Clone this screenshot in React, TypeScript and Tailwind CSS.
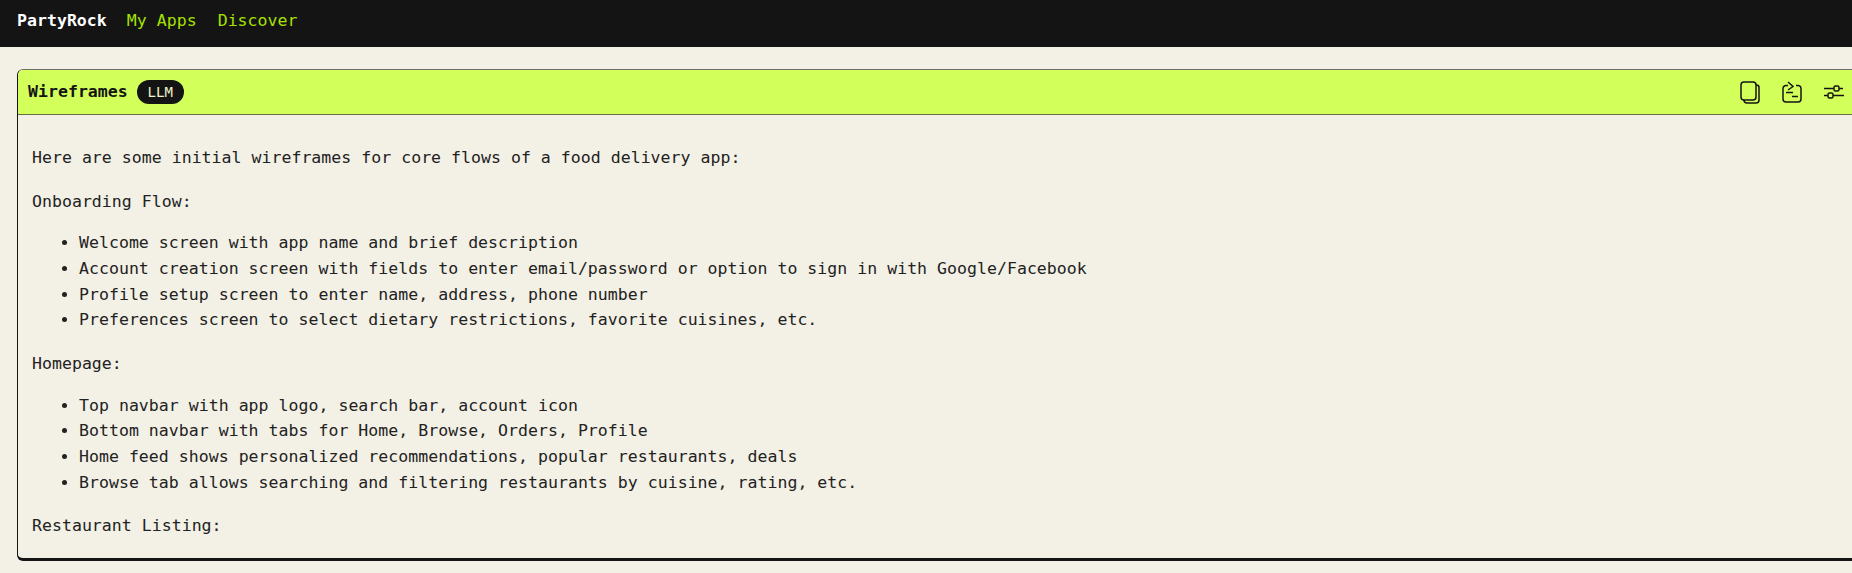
import React from "react";

const mono = "font-['DejaVu_Sans_Mono',monospace]";

function Para({ children }: { children: React.ReactNode }) {
  return <p className="my-4 leading-[25.6px]">{children}</p>;
}

function Bullets({ items }: { items: string[] }) {
  return (
    <ul className="mt-4 mb-[18px] list-disc pl-[47px]">
      {items.map((t) => (
        <li key={t} className="leading-[25.7px]">{t}</li>
      ))}
    </ul>
  );
}

export default function App() {
  return (
    <div className={`h-[573px] w-[1852px] overflow-hidden bg-[#f3f0e5] ${mono} text-[16.54px] tracking-[0.025px] text-[#222222]`}>
      <nav className="flex h-[47px] items-center bg-[#141414] pb-[5px] pl-[17px]">
        <span className="font-bold text-white">PartyRock</span>
        <span className="ml-[20px] text-[#a6e000]">My Apps</span>
        <span className="ml-[21px] text-[#a6e000]">Discover</span>
      </nav>
      <div className="pl-[17px] pt-[22px]">
        <section className="h-[492px] w-[1880px] overflow-hidden rounded-[6px] border border-b-[3px] border-[#141414] border-t-[#6f6f64]">
          <header className="flex h-[45px] items-center border-b border-[#66703f] bg-[#d3ff5a] pl-[10px]">
            <span className="font-bold text-[#141414]">Wireframes</span>
            <span className="ml-[9px] flex h-[24px] w-[47px] items-center justify-center rounded-full bg-[#141414] text-[14px] text-[#eef5c8]">LLM</span>
            <div className="ml-auto mr-[52px] flex items-center gap-[22px] text-[#141414]">
              <svg width="20" height="23" viewBox="0 0 20 23" fill="none" stroke="currentColor" strokeWidth="1.5">
                <rect x="1" y="1" width="15" height="18" rx="3" />
                <path d="M16 4h.5A2.500 2.500 0 0 1 19 6.500V19a3 3 0 0 1-3 3H7a3 3 0 0 1-3-3" />
              </svg>
              <svg width="20" height="23" viewBox="0 0 20 23" fill="none" stroke="currentColor" strokeWidth="1.5">
                <path d="M6 4.500H4a3 3 0 0 0-3 3V18a3 3 0 0 0 3 3h12a3 3 0 0 0 3-3V7.500a3 3 0 0 0-3-3h-2" />
                <path d="M6 1l5 4.500L6 9" />
                <path d="M4 11.500h7M10 15.500h6" />
              </svg>
              <svg width="20" height="14" viewBox="0 0 20 14" fill="none" stroke="currentColor" strokeWidth="1.5">
                <path d="M0 3.500h10M15 3.500h4M0 10.500h4M9 10.500h11" />
                <rect x="10" y="1" width="5" height="5" rx="1.500" />
                <rect x="4" y="8" width="5" height="5" rx="1.500" />
              </svg>
            </div>
          </header>
          <div className="pl-[14px] pt-[14px]">
            <p className="mt-4 mb-[18px] leading-[25.6px]">Here are some initial wireframes for core flows of a food delivery app:</p>
            <Para>Onboarding Flow:</Para>
            <Bullets items={[
              "Welcome screen with app name and brief description",
              "Account creation screen with fields to enter email/password or option to sign in with Google/Facebook",
              "Profile setup screen to enter name, address, phone number",
              "Preferences screen to select dietary restrictions, favorite cuisines, etc.",
            ]} />
            <Para>Homepage:</Para>
            <Bullets items={[
              "Top navbar with app logo, search bar, account icon",
              "Bottom navbar with tabs for Home, Browse, Orders, Profile",
              "Home feed shows personalized recommendations, popular restaurants, deals",
              "Browse tab allows searching and filtering restaurants by cuisine, rating, etc.",
            ]} />
            <Para>Restaurant Listing:</Para>
          </div>
        </section>
      </div>
    </div>
  );
}
